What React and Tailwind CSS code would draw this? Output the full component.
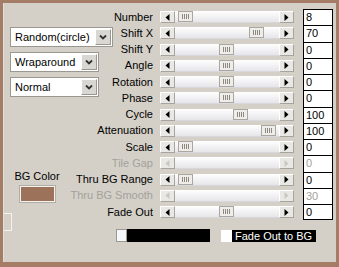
import React from 'react';

const rows = [
  { label: 'Number', value: '8', thumb: 3 },
  { label: 'Shift X', value: '70', thumb: 74 },
  { label: 'Shift Y', value: '0', thumb: 44 },
  { label: 'Angle', value: '0', thumb: 44 },
  { label: 'Rotation', value: '0', thumb: 44 },
  { label: 'Phase', value: '0', thumb: 44 },
  { label: 'Cycle', value: '100', thumb: 58 },
  { label: 'Attenuation', value: '100', thumb: 86 },
  { label: 'Scale', value: '0', thumb: 3 },
  { label: 'Tile Gap', value: '0', disabled: true },
  { label: 'Thru BG Range', value: '0', thumb: 3 },
  { label: 'Thru BG Smooth', value: '30', disabled: true },
  { label: 'Fade Out', value: '0', thumb: 44 },
];

const ArrowBtn = ({ dir, disabled }) => (
  <div className="w-[15px] h-[12px] shrink-0 flex items-center justify-center bg-[#e9e8e4] border border-t-white border-l-white border-r-[#a6a49c] border-b-[#a6a49c]">
    <svg width="5" height="7" viewBox="0 0 5 7">
      <path
        d={dir === 'left' ? 'M4.5 0L0.5 3.5L4.5 7Z' : 'M0.5 0L4.5 3.5L0.5 7Z'}
        fill={disabled ? '#c9c7c1' : '#000'}
      />
    </svg>
  </div>
);

const Thumb = ({ offset }) => (
  <div
    className="w-[15px] h-[11px] shrink-0 flex items-center justify-center gap-[1px] bg-[#eeede9] border border-[#a9a7a0]"
    style={{ marginLeft: offset }}
  >
    <div className="w-[1px] h-[5px] bg-[#8a8880]" />
    <div className="w-[1px] h-[5px] bg-[#8a8880]" />
    <div className="w-[1px] h-[5px] bg-[#8a8880]" />
    <div className="w-[1px] h-[5px] bg-[#8a8880]" />
  </div>
);

const Dropdown = ({ text, width }) => (
  <div className={`${width} h-[20px] flex bg-white border border-[#9b9891]`}>
    <div className="flex-1 pl-[4px] flex items-center text-[11px] text-black leading-none">{text}</div>
    <div className="w-[16px] my-[1px] mr-[1px] flex items-center justify-center bg-[#d9d7d1] border border-t-white border-l-white border-r-[#9a978f] border-b-[#9a978f]">
      <svg width="8" height="6" viewBox="0 0 8 6">
        <path d="M1 1.5L4 4.5L7 1.5" stroke="#333" strokeWidth="1.8" fill="none" />
      </svg>
    </div>
  </div>
);

export default function App() {
  return (
    <div
      className="w-[339px] h-[267px] bg-[#d4d0c8] border-[3px] border-b-[5px] border-[#a57c66] overflow-hidden"
      style={{ fontFamily: '"Liberation Sans", Arial, sans-serif' }}
    >
      <div className="h-full flex items-start border-l border-[#e2dfd9]">
        {/* left column */}
        <div className="w-[96px] shrink-0 flex flex-col">
          <div className="ml-[6px] mt-[24px] flex flex-col gap-[5px]">
            <Dropdown text="Random(circle)" width="w-[103px]" />
            <Dropdown text="Wraparound" width="w-[89px]" />
            <Dropdown text="Normal" width="w-[89px]" />
          </div>
          <div className="ml-[6px] mt-[73px] w-[54px] flex flex-col items-center">
            <div className="text-[11px] leading-[13px] text-black whitespace-nowrap">BG Color</div>
            <div className="mt-[3px] w-[35px] h-[16px] bg-[#9c725a] border border-[#f4f2ee] outline outline-1 outline-[#b0ada6]" />
          </div>
          <div className="mt-[11px] w-[8px] h-[18px] border-t border-r border-b border-[#f4f2ee]" />
        </div>

        {/* right column */}
        <div className="flex flex-col pt-[6px]">
          {rows.map((r, i) => (
            <div key={r.label} className="h-[16.25px] flex items-center">
              <div className="w-[53px] flex justify-end">
                <span
                  className={`text-[11px] leading-none whitespace-nowrap ${r.disabled ? 'text-[#a3a19b]' : 'text-black'}`}
                >
                  {r.label}
                </span>
              </div>
              <div className="ml-[7px] w-[134px] h-[12px] flex">
                <ArrowBtn dir="left" disabled={r.disabled} />
                <div className="flex-1 h-[12px] flex items-center bg-gradient-to-b from-white to-[#e6e6ea] border-b border-[#d8d8dc]">
                  {!r.disabled && <Thumb offset={r.thumb} />}
                </div>
                <ArrowBtn dir="right" disabled={r.disabled} />
              </div>
              <div
                className={`ml-[9px] w-[30px] h-full bg-white border-l border-r border-t border-black pl-[2px] flex items-center text-[11px] leading-none ${
                  i === rows.length - 1 ? 'border-b' : ''
                } ${r.disabled ? 'text-[#a3a19b]' : 'text-black'}`}
              >
                {r.value}
              </div>
            </div>
          ))}

          {/* bottom row */}
          <div className="flex items-center ml-[16px] mt-[9px]">
            <div className="w-[11px] h-[13px] bg-[#f4f8fa] border border-[#9b9891]" />
            <div className="w-[83px] h-[13px] bg-black" />
            <div className="ml-[11px] w-[11px] h-[12px] bg-white" />
            <div className="w-[84px] h-[12px] bg-black text-white text-[11px] leading-[12px] pl-[3px] whitespace-nowrap">
              Fade Out to BG
            </div>
          </div>
        </div>
      </div>
    </div>
  );
}
